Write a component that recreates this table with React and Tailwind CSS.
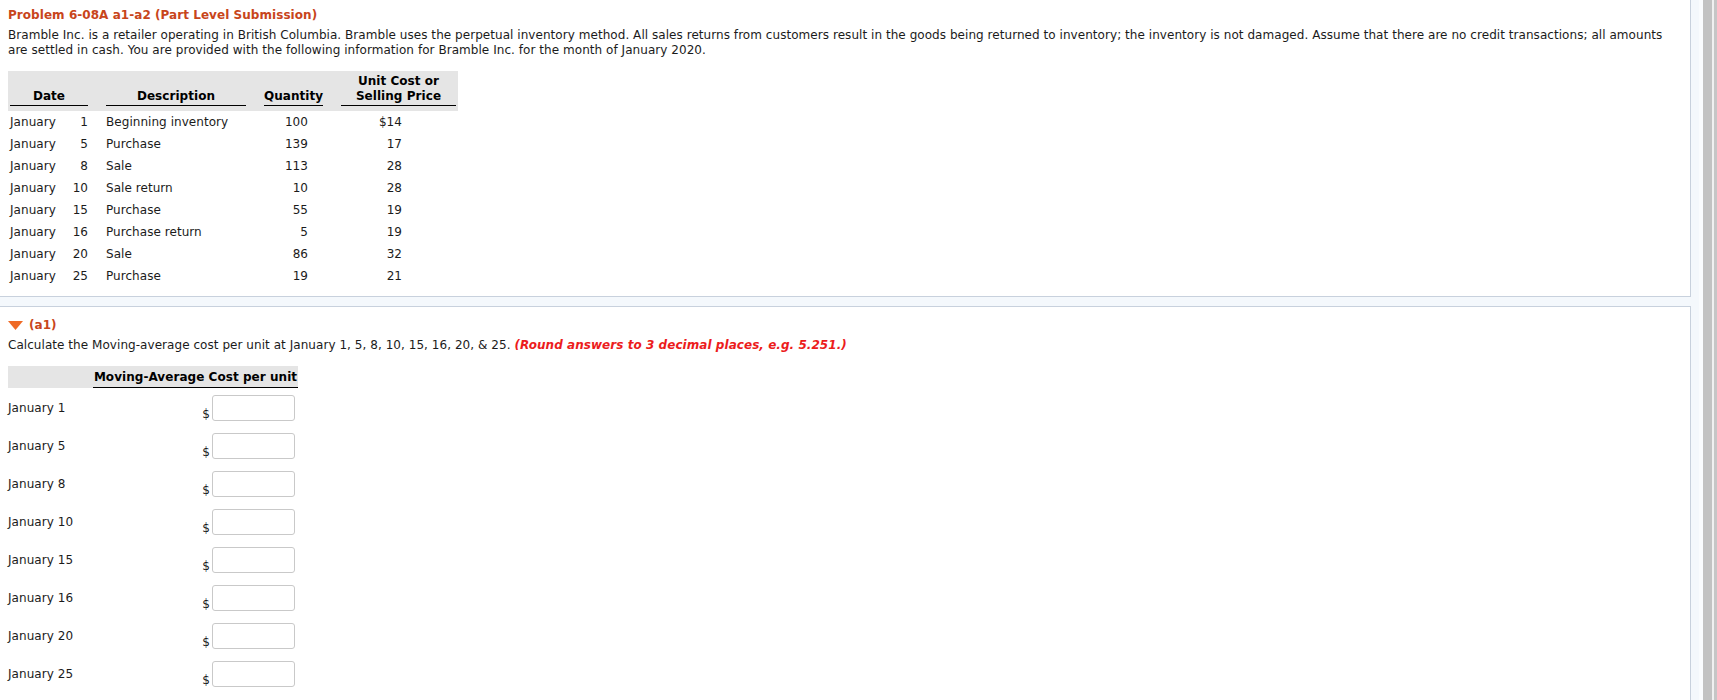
import React from 'react';

const rows = [
  { day: 1, desc: 'Beginning inventory', qty: 100, price: '$14' },
  { day: 5, desc: 'Purchase', qty: 139, price: '17' },
  { day: 8, desc: 'Sale', qty: 113, price: '28' },
  { day: 10, desc: 'Sale return', qty: 10, price: '28' },
  { day: 15, desc: 'Purchase', qty: 55, price: '19' },
  { day: 16, desc: 'Purchase return', qty: 5, price: '19' },
  { day: 20, desc: 'Sale', qty: 86, price: '32' },
  { day: 25, desc: 'Purchase', qty: 19, price: '21' },
];

const dates = [1, 5, 8, 10, 15, 16, 20, 25];

const InfoTable = () => (
  <div className="w-[450px] mt-[13px]">
    {/* header */}
    <div className="bg-[#e5e5e5] grid grid-cols-[78px_140px_59px_115px] gap-x-[18px] px-[2px] pt-[3px] pb-[5px] font-bold text-black leading-[15px]">
      <div className="flex items-end justify-center border-b-[1.5px] border-black pb-[1px]">Date</div>
      <div className="flex items-end justify-center border-b-[1.5px] border-black pb-[1px]">Description</div>
      <div className="flex items-end justify-center border-b-[1.5px] border-black pb-[1px]">Quantity</div>
      <div className="flex flex-col items-center justify-end border-b-[1.5px] border-black pb-[1px]">
        <span>Unit Cost or</span>
        <span>Selling Price</span>
      </div>
    </div>
    {/* body */}
    {rows.map((r) => (
      <div key={r.day} className="grid grid-cols-[78px_140px_59px_115px] gap-x-[18px] px-[2px] h-[22px] items-center">
        <div className="flex justify-between">
          <span>January</span>
          <span>{r.day}</span>
        </div>
        <div>{r.desc}</div>
        <div className="text-right pr-[15px]">{r.qty}</div>
        <div className="text-right pr-[54px]">{r.price}</div>
      </div>
    ))}
  </div>
);

const CostTable = () => (
  <div className="w-[290px] mt-[13px]">
    <div className="bg-[#e5e5e5] flex h-[22px]">
      <div className="w-[85px]" />
      <div className="flex-1 border-b-[1.5px] border-black font-bold text-black flex items-center justify-center pt-[1px] whitespace-nowrap">
        Moving-Average Cost per unit
      </div>
    </div>
    {dates.map((d) => (
      <div key={d} className="flex h-[38px]">
        <div className="w-[85px] pt-[13px] leading-[15px]">January {d}</div>
        <div className="flex-1 flex justify-end items-start pt-[7px] pr-[3px]">
          <div className="flex items-end">
            <span className="leading-[12px] mr-[2px] mb-[1px]">$</span>
            <input
              type="text"
              className="w-[83px] h-[26px] border border-[#c9c9c9] rounded-[3px] bg-white outline-none px-1"
            />
          </div>
        </div>
      </div>
    ))}
  </div>
);

export default function App() {
  return (
    <div
      className="flex h-[700px] overflow-hidden bg-white text-[12px] text-[#1b1b1b] tracking-[0.05px]"
      style={{ fontFamily: '"DejaVu Sans", Verdana, sans-serif' }}
    >
      {/* main column */}
      <div className="w-[1699px] shrink-0 bg-[#f4f8fc] flex flex-col">
        {/* Problem panel */}
        <div className="w-[1691px] bg-white border-r border-b border-[#c8d1dd] pt-[7px] pl-[8px] pr-[8px] pb-[9px]">
          <div className="font-bold text-[#c8451b] leading-[16px]">
            Problem 6-08A a1-a2 (Part Level Submission)
          </div>
          <p className="mt-[5px] leading-[15px] whitespace-nowrap">
            Bramble Inc. is a retailer operating in British Columbia. Bramble uses the perpetual inventory method. All sales returns from customers result in the goods being returned to inventory; the inventory is not damaged. Assume that there are no credit transactions; all amounts
            <br />
            are settled in cash. You are provided with the following information for Bramble Inc. for the month of January 2020.
          </p>
          <InfoTable />
        </div>

        {/* Part a1 panel */}
        <div className="w-[1691px] mt-[9px] flex-1 bg-white border-r border-t border-[#c8d1dd] pt-[10px] pl-[8px]">
          <div className="flex items-center gap-[6px] leading-[16px]">
            <svg width="15" height="9" viewBox="0 0 15 9" className="shrink-0">
              <polygon points="0,0 15,0 7.5,9" fill="#ef6a26" />
            </svg>
            <span className="font-bold text-[#c8451b]">(a1)</span>
          </div>
          <p className="mt-[5px] leading-[15px]">
            Calculate the Moving-average cost per unit at January 1, 5, 8, 10, 15, 16, 20, &amp; 25.{' '}
            <span className="font-bold italic text-[#ec1c1c]">
              (Round answers to 3 decimal places, e.g. 5.251.)
            </span>
          </p>
          <CostTable />
        </div>
      </div>

      {/* right strip */}
      <div className="flex-1 flex">
        <div className="w-[4px] bg-[#fafcfe]" />
        <div className="w-[9px] bg-[#c2c2c2]" />
        <div className="w-[2px] bg-[#f0f0f0]" />
        <div className="flex-1 bg-[#c6c6c6]" />
      </div>
    </div>
  );
}
